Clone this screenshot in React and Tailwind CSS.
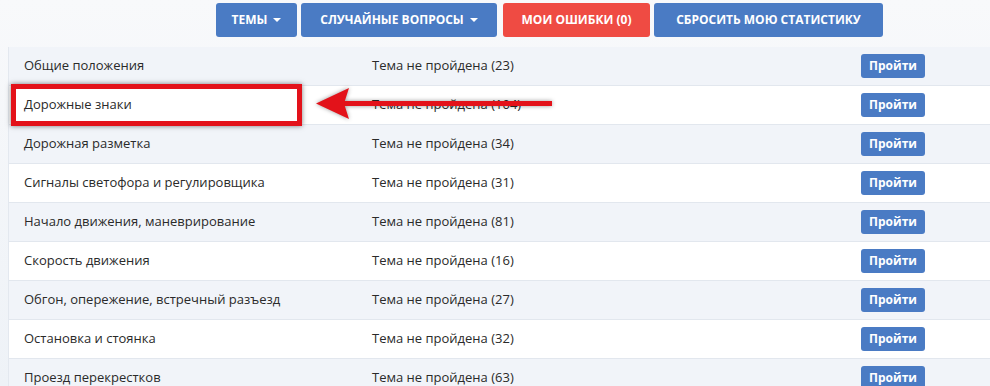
import React from "react";

const rows = [
  ["Общие положения", 23],
  ["Дорожные знаки", 104],
  ["Дорожная разметка", 34],
  ["Сигналы светофора и регулировщика", 31],
  ["Начало движения, маневрирование", 81],
  ["Скорость движения", 16],
  ["Обгон, опережение, встречный разъезд", 27],
  ["Остановка и стоянка", 32],
  ["Проезд перекрестков", 63],
];

function Caret() {
  return <span className="ml-[6px] inline-block w-0 h-0 border-l-[4px] border-r-[4px] border-t-[4px] border-l-transparent border-r-transparent border-t-white align-middle" />;
}

export default function App() {
  return (
    <div className="relative w-[990px] h-[386px] overflow-hidden bg-gradient-to-b from-[#f8f9fb] to-[#eef2f7] text-[#2a2a2a]" style={{ fontFamily: '"Open Sans", "Liberation Sans", sans-serif' }}>
      <div className="h-[47px] flex items-start pt-[3px] pl-[216px] gap-[4px]">
        <button className="h-[34px] w-[81px] rounded-[3px] bg-[#4a7bc4] text-white text-[12px] font-bold uppercase flex items-center justify-center">Темы<Caret /></button>
        <button className="h-[34px] w-[196px] rounded-[3px] bg-[#4a7bc4] text-white text-[12px] font-bold uppercase flex items-center justify-center">Случайные вопросы<Caret /></button>
        <button className="ml-[2px] h-[34px] w-[147px] rounded-[3px] bg-[#ef4b43] text-white text-[12px] font-bold uppercase flex items-center justify-center">Мои ошибки (0)</button>
        <button className="h-[34px] w-[229px] rounded-[3px] bg-[#4a7bc4] text-white text-[12px] font-bold uppercase flex items-center justify-center">Сбросить мою статистику</button>
      </div>
      <div className="ml-[8px] border-l border-[#e3e8ef]">
        {rows.map(([name, n], i) => (
          <div key={name} className={`h-[39px] flex items-center border-b border-[#e2e7ee] text-[13px] ${i % 2 === 0 ? "bg-[#f1f4f9]" : "bg-white"}`}>
            <div className="w-[363px] pl-[15px]">{name}</div>
            <div className="w-[489px]">Тема не пройдена ({n})</div>
            <button className="h-[24px] w-[64px] rounded-[3px] bg-[#4a7bc4] text-white text-[12px] font-bold flex items-center justify-center">Пройти</button>
          </div>
        ))}
      </div>
      <div className="absolute left-[11px] top-[84px] w-[291px] h-[42px] border-[5px] border-[#e3121a] shadow-[0_0_5px_rgba(0,0,0,0.5)]" />
      <svg className="absolute left-[312px] top-[83px]" width="250" height="42" viewBox="0 0 250 42" style={{ filter: "drop-shadow(0 0 2px rgba(0,0,0,0.4))" }}>
        <rect x="28" y="18" width="212" height="5" fill="#e3121a" />
        <polygon points="4,20.5 37,5 32,20.5 37,36" fill="#e3121a" />
      </svg>
    </div>
  );
}
